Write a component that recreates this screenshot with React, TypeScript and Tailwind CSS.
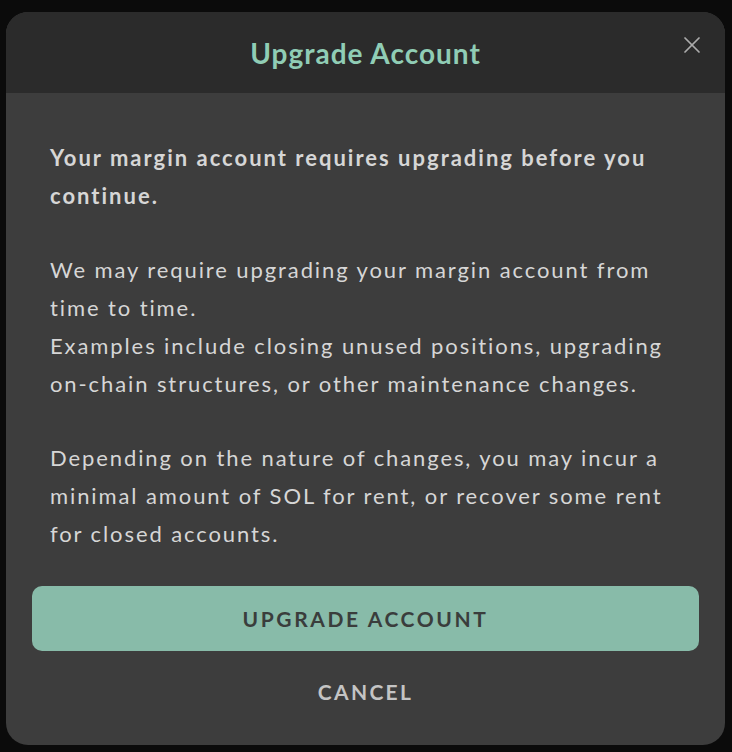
import { X } from "lucide-react";

export default function App() {
  return (
    <div
      className="h-[752px] w-[732px] overflow-hidden bg-[#0b0b0b] pl-[6px] pt-[12px]"
      style={{ fontFamily: "Lato, 'Open Sans', sans-serif" }}
    >
      <div className="relative flex h-[733px] w-[719px] flex-col overflow-hidden rounded-[22px] bg-[#3d3d3d]">
        <div className="flex h-[81px] shrink-0 items-center justify-center bg-[#2b2b2b]">
          <h2 className="text-[28px] font-bold tracking-[1px] text-[#90cdb5]">Upgrade Account</h2>
          <button className="absolute right-[19px] top-[19px] text-[#ababab]">
            <X size={28} strokeWidth={1.5} />
          </button>
        </div>

        <div className="flex flex-1 flex-col px-[26px] pt-[46px]">
          <div className="px-[18px] text-[22px] leading-[38px] tracking-[1.9px] text-[#d6d6d6]">
            <p className="font-bold tracking-[2px]">
              Your margin account requires upgrading before you continue.
            </p>
            <p className="mt-[36px]">
              We may require upgrading your margin account from time to time.
              <br />
              Examples include closing unused positions, upgrading on-chain
              structures, or other maintenance changes.
            </p>
            <p className="mt-[36px]">
              Depending on the nature of changes, you may incur a minimal amount
              of SOL for rent, or recover some rent for closed accounts.
            </p>
          </div>

          <button className="mt-[33px] h-[65px] w-full rounded-[10px] bg-[#88bba9] text-[21px] font-bold tracking-[2.6px] text-[#3a3d3c]">
            UPGRADE ACCOUNT
          </button>
          <button className="mt-[25px] text-[21px] font-bold tracking-[2.3px] text-[#c4c4c4]">
            CANCEL
          </button>
        </div>
      </div>
    </div>
  );
}
